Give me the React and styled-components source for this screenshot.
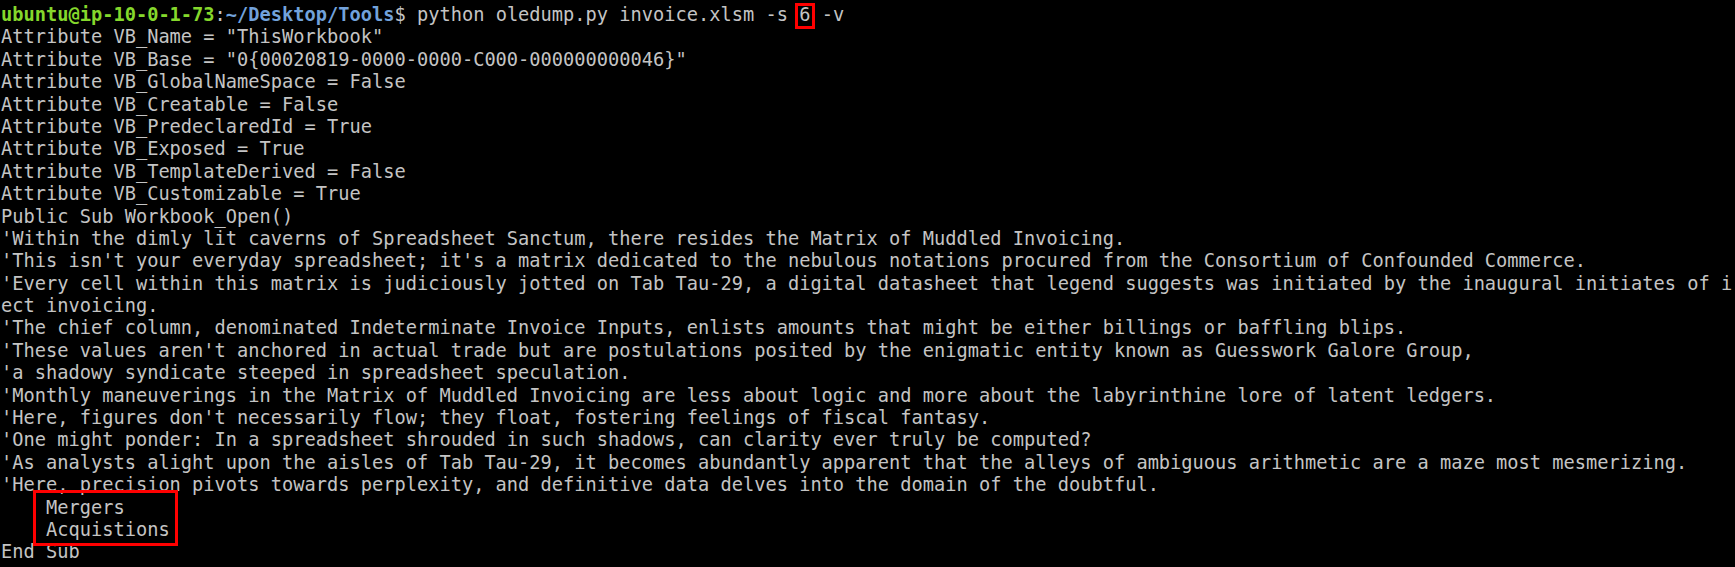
import styled, { createGlobalStyle } from 'styled-components';

const GlobalStyle = createGlobalStyle`
	html, body {
		margin: 0;
		padding: 0;
		background: #000;
	}
`;

const lines = [
	'Attribute VB_Name = "ThisWorkbook"',
	'Attribute VB_Base = "0{00020819-0000-0000-C000-000000000046}"',
	'Attribute VB_GlobalNameSpace = False',
	'Attribute VB_Creatable = False',
	'Attribute VB_PredeclaredId = True',
	'Attribute VB_Exposed = True',
	'Attribute VB_TemplateDerived = False',
	'Attribute VB_Customizable = True',
	'Public Sub Workbook_Open()',
	"'Within the dimly lit caverns of Spreadsheet Sanctum, there resides the Matrix of Muddled Invoicing.",
	"'This isn't your everyday spreadsheet; it's a matrix dedicated to the nebulous notations procured from the Consortium of Confounded Commerce.",
	"'Every cell within this matrix is judiciously jotted on Tab Tau-29, a digital datasheet that legend suggests was initiated by the inaugural initiates of i",
	'ect invoicing.',
	"'The chief column, denominated Indeterminate Invoice Inputs, enlists amounts that might be either billings or baffling blips.",
	"'These values aren't anchored in actual trade but are postulations posited by the enigmatic entity known as Guesswork Galore Group,",
	"'a shadowy syndicate steeped in spreadsheet speculation.",
	"'Monthly maneuverings in the Matrix of Muddled Invoicing are less about logic and more about the labyrinthine lore of latent ledgers.",
	"'Here, figures don't necessarily flow; they float, fostering feelings of fiscal fantasy.",
	"'One might ponder: In a spreadsheet shrouded in such shadows, can clarity ever truly be computed?",
	"'As analysts alight upon the aisles of Tab Tau-29, it becomes abundantly apparent that the alleys of ambiguous arithmetic are a maze most mesmerizing.",
	"'Here, precision pivots towards perplexity, and definitive data delves into the domain of the doubtful.",
];

export default function App() {
	return (
		<>
			<GlobalStyle />
			<Terminal>
				<Line>
					<User>ubuntu@ip-10-0-1-73</User>:<Path>~/Desktop/Tools</Path>$ python oledump.py invoice.xlsm -s{' '}
					<Marked>6</Marked> -v
				</Line>
				{lines.map((l, i) => (
					<Line key={i}>{l}</Line>
				))}
				<Boxed>
					<Line>{'    Mergers'}</Line>
					<Line>{'    Acquistions'}</Line>
				</Boxed>
				<Line>End Sub</Line>
			</Terminal>
		</>
	);
}

const Terminal = styled.div`
	width: 1735px;
	height: 567px;
	box-sizing: border-box;
	padding: 4px 0 0 1px;
	background: #000;
	color: #c4c4c4;
	font-family: 'DejaVu Sans Mono', monospace;
	font-size: 18.68px;
	line-height: 22.4px;
	overflow: hidden;
`;

const Line = styled.div`
	white-space: pre;
	height: 22.4px;
`;

const User = styled.span`
	color: #85d82c;
	font-weight: bold;
`;

const Path = styled.span`
	color: #72a2db;
	font-weight: bold;
`;

const Marked = styled.span`
	position: relative;

	&::after {
		content: '';
		position: absolute;
		left: -4px;
		right: -5px;
		top: -1px;
		bottom: -4px;
		border: 3px solid #f00;
	}
`;

const Boxed = styled.div`
	position: relative;

	&::after {
		content: '';
		position: absolute;
		left: 32px;
		width: 145px;
		top: -7px;
		bottom: -5px;
		box-sizing: border-box;
		border: 3px solid #f00;
	}
`;
